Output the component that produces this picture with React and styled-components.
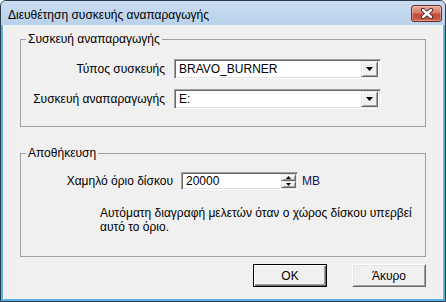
import React from 'react'
import styled, { createGlobalStyle } from 'styled-components'

const GlobalStyle = createGlobalStyle`
  html, body {
    margin: 0;
    padding: 0;
    background: #ffffff;
  }
  body {
    font-family: "Liberation Sans", Arial, sans-serif;
    font-size: 12px;
    color: #000;
  }
`

const Window = styled.div`
  width: 446px;
  height: 302px;
  box-sizing: border-box;
  border: 1px solid #2b3a48;
  border-radius: 6px 6px 0 0;
  background: #5fb0e2;
  display: flex;
  flex-direction: column;
  overflow: hidden;
`

const TitleBar = styled.div`
  height: 24px;
  flex: none;
  display: flex;
  align-items: flex-start;
  justify-content: space-between;
  padding: 0 3px 0 7px;
  background: linear-gradient(#cadcf1, #b9d1ea);
`

const Title = styled.span`
  font-size: 12px;
  line-height: 14px;
  padding-top: 7px;
`

const CloseButton = styled.div`
  width: 31px;
  height: 17px;
  margin-top: 4px;
  box-sizing: border-box;
  border: 1px solid #6b2a22;
  border-radius: 3px;
  background: linear-gradient(#e8a999 0%, #d47a68 45%, #c24a36 55%, #c9604a 100%);
  box-shadow: inset 0 0 0 1px rgba(255, 255, 255, 0.35);
  display: flex;
  align-items: center;
  justify-content: center;
`

const Client = styled.div`
  flex: 1;
  background: #f0f0f0;
  margin: 0 2px 2px 2px;
  border-left: 1px solid #fdfdfd;
  border-right: 1px solid #fdfdfd;
  padding: 7px 16px 0 16px;
  display: flex;
  flex-direction: column;
`

const Group = styled.fieldset`
  margin: 0 0 ${p => p.$gap || 0}px 0;
  padding: ${p => p.$pad};
  min-inline-size: 0;
  border: 1px solid #a0a0a0;
`

const Legend = styled.legend`
  margin-left: 5px;
  padding: 0 2px;
  line-height: 14px;
`

const Rows = styled.div`
  display: grid;
  grid-template-columns: ${p => p.$label}px auto auto;
  column-gap: ${p => p.$gap}px;
  row-gap: 10px;
  align-items: center;
  justify-content: start;
`

const Label = styled.span`
  text-align: right;
  white-space: nowrap;
  margin-right: ${p => p.$inset || 0}px;
`

const Sunken = styled.div`
  box-sizing: border-box;
  width: ${p => p.$w}px;
  height: ${p => p.$h}px;
  background: #fff;
  border-style: solid;
  border-width: 1px;
  border-color: #a0a0a0 #ffffff #ffffff #a0a0a0;
  box-shadow: inset 1px 1px 0 #696969, inset -1px -1px 0 #e3e3e3;
  display: flex;
  align-items: center;
  padding: 2px 2px 2px 3px;
`

const FieldText = styled.span`
  flex: 1;
  padding-left: 1px;
  white-space: nowrap;
`

const ArrowButton = styled.div`
  box-sizing: border-box;
  width: 17px;
  height: 16px;
  background: #f0f0f0;
  border-style: solid;
  border-width: 1px;
  border-color: #e3e3e3 #696969 #696969 #e3e3e3;
  box-shadow: inset 1px 1px 0 #fff, inset -1px -1px 0 #a0a0a0;
  display: flex;
  align-items: center;
  justify-content: center;
`

const SpinStack = styled.div`
  display: flex;
  flex-direction: column;
  align-self: stretch;
  margin: -1px -1px -1px 0;
`

const SpinButton = styled(ArrowButton)`
  width: 15px;
  height: 7px;
  flex: 1;
`

const Unit = styled.span`
  color: #14145a;
`

const Note = styled.p`
  margin: 16px 0 0 79px;
  line-height: 14px;
`

const Footer = styled.div`
  display: flex;
  justify-content: flex-end;
  gap: 25px;
  margin-top: 7px;
`

const Button = styled.div`
  box-sizing: border-box;
  width: 74px;
  height: 23px;
  background: #f0f0f0;
  border: 1px solid ${p => (p.$default ? '#000' : '#ffffff')};
  border-right-color: ${p => (p.$default ? '#000' : '#696969')};
  border-bottom-color: ${p => (p.$default ? '#000' : '#696969')};
  box-shadow: ${p =>
    p.$default
      ? 'inset 1px 1px 0 #fff, inset -1px -1px 0 #696969, inset -2px -2px 0 #a0a0a0'
      : 'inset 1px 1px 0 #e3e3e3, inset -1px -1px 0 #a0a0a0'};
  display: flex;
  align-items: center;
  justify-content: center;
`

const Arrow = () => (
  <svg width="7" height="4" viewBox="0 0 7 4">
    <path d="M0 0H7L3.5 4Z" fill="#000" />
  </svg>
)

const SmallArrow = ({ up }) => (
  <svg width="5" height="3" viewBox="0 0 5 3">
    <path d={up ? 'M0 3H5L2.5 0Z' : 'M0 0H5L2.5 3Z'} fill="#000" />
  </svg>
)

const CloseIcon = () => (
  <svg width="14" height="11" viewBox="0 0 14 11">
    <path d="M3 2L11 9M11 2L3 9" stroke="#4a2020" strokeWidth="4.2" strokeLinecap="round" />
    <path d="M3 2L11 9M11 2L3 9" stroke="#ffffff" strokeWidth="2.4" strokeLinecap="round" />
  </svg>
)

const Combo = ({ value }) => (
  <Sunken $w={207} $h={20}>
    <FieldText>{value}</FieldText>
    <ArrowButton>
      <Arrow />
    </ArrowButton>
  </Sunken>
)

const App = () => (
  <>
    <GlobalStyle />
    <Window>
      <TitleBar>
        <Title>Διευθέτηση συσκευής αναπαραγωγής</Title>
        <CloseButton>
          <CloseIcon />
        </CloseButton>
      </TitleBar>
      <Client>
        <Group $pad="13px 0 17px 0" $gap={19}>
          <Legend>Συσκευή αναπαραγωγής</Legend>
          <Rows $label={144} $gap={9}>
            <Label>Τύπος συσκευής</Label>
            <Combo value="BRAVO_BURNER" />
            <span />
            <Label>Συσκευή αναπαραγωγής</Label>
            <Combo value="E:" />
            <span />
          </Rows>
        </Group>
        <Group $pad="12px 0 22px 0">
          <Legend>Αποθήκευση</Legend>
          <Rows $label={156} $gap={4}>
            <Label $inset={4}>Χαμηλό όριο δίσκου</Label>
            <Sunken $w={117} $h={18}>
              <FieldText>20000</FieldText>
              <SpinStack>
                <SpinButton>
                  <SmallArrow up />
                </SpinButton>
                <SpinButton>
                  <SmallArrow />
                </SpinButton>
              </SpinStack>
            </Sunken>
            <Unit>MB</Unit>
          </Rows>
          <Note>
            Αυτόματη διαγραφή μελετών όταν ο χώρος δίσκου υπερβεί
            <br />
            αυτό το όριο.
          </Note>
        </Group>
        <Footer>
          <Button $default>OK</Button>
          <Button>Άκυρο</Button>
        </Footer>
      </Client>
    </Window>
  </>
)

export default App
